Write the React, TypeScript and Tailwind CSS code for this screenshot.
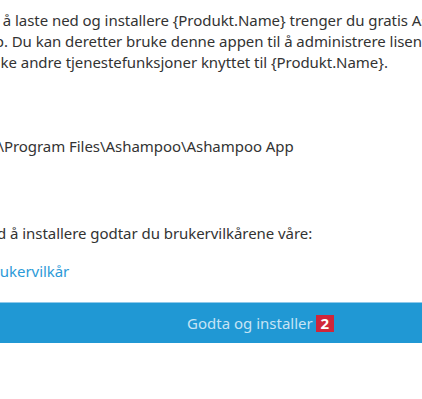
export default function App() {
  const font = { fontFamily: '"Noto Sans", "Open Sans", sans-serif' };
  return (
    <div className="w-[422px] h-[399px] bg-white overflow-hidden" style={font}>
      <div className="w-[600px] text-[15px] leading-[21px] text-[#333333] tracking-[-0.05px]">
        <div className="pt-[10px] ml-[-24px] whitespace-nowrap">
          <div>For å laste ned og installere {'{Produkt.Name}'} trenger du gratis Ashampoo</div>
          <div>App. Du kan deretter bruke denne appen til å administrere lisenser og</div>
          <div>bruke andre tjenestefunksjoner knyttet til {'{Produkt.Name}'}.</div>
        </div>
        <div className="mt-[63px] ml-[-15px] whitespace-nowrap">C:\Program Files\Ashampoo\Ashampoo App</div>
        <div className="mt-[66px] ml-[-20px] whitespace-nowrap">Ved å installere godtar du brukervilkårene våre:</div>
        <div className="mt-[17px] ml-[-16px] whitespace-nowrap text-[#2b9ad8]">Brukervilkår</div>
      </div>
      <div className="mt-[20px] h-[41px] bg-[#2098d4] border-t border-[#8fc9ea] flex items-center pl-[187px] gap-[3px]">
        <span className="text-[15px] text-[#c7e4f5]">Godta og installer</span>
        <span className="bg-[#d0263a] text-white font-bold text-[15px] leading-[17px] w-[18px] h-[17px] flex items-center justify-center">2</span>
      </div>
    </div>
  );
}
